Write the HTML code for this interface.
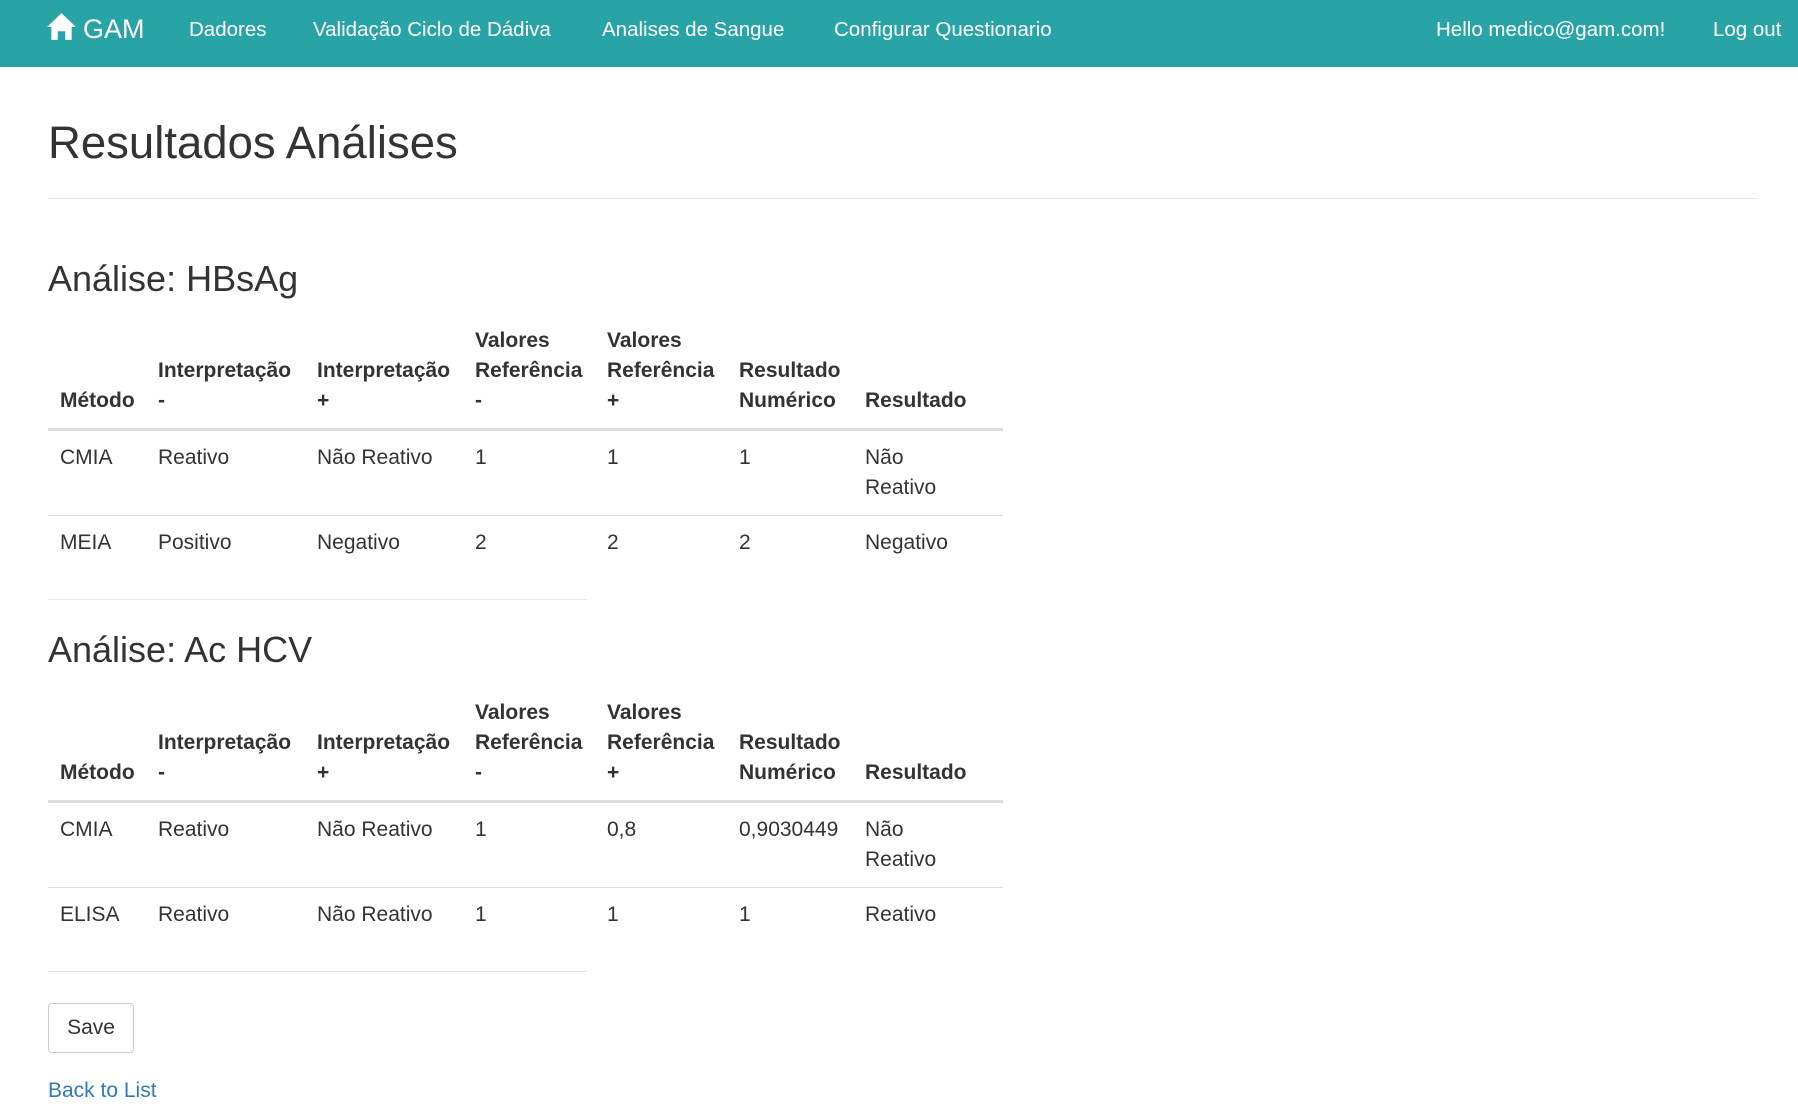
<!DOCTYPE html>
<html><head><meta charset="utf-8"><style>
*{box-sizing:border-box}
body{margin:0;width:1798px;height:1117px;overflow:hidden;background:#fff;font-family:"Liberation Sans",Arial,sans-serif;color:#333;font-size:21px;line-height:30px;position:relative}
.nav{position:absolute;left:0;top:0;width:1798px;height:67px;background:#29a4a6;color:#fff}
.nav span{position:absolute;top:15px;font-size:20.5px;line-height:30px;white-space:nowrap}
.brand{font-size:27px!important;top:14px!important}
h1{position:absolute;left:48px;top:113px;margin:0;font-size:45.5px;line-height:60px;font-weight:400}
h3{position:absolute;left:48px;margin:0;font-size:36px;line-height:42px;font-weight:400}
.hr{position:absolute;left:48px;height:1px;background:#e5e5e5}
table{position:absolute;left:48px;border-collapse:collapse;table-layout:fixed;width:955px}
th,td{padding:12px;text-align:left;vertical-align:top}
th{vertical-align:bottom;border-bottom:3px solid #ddd;font-weight:700}
td{border-top:1px solid #ddd}
tr:nth-child(1) td{border-top:0}
.btn{position:absolute;left:48px;top:1003px;width:86px;height:50px;border:1px solid #ccc;border-radius:4px;font-size:21px;line-height:48px;text-align:center;color:#333}
a{position:absolute;left:48px;top:1076px;color:#337ab7;text-decoration:none;font-size:21px}
</style></head><body>
<div class="nav">
<svg style="position:absolute;left:46px;top:12px" width="31" height="29" viewBox="0 0 29 27"><path d="M14.5 1 L1 14 L5 14 L5 26 L11 26 L11 18 L18 18 L18 26 L24 26 L24 14 L28 14 Z" fill="#fff"/></svg>
<span class="brand" style="left:83px">GAM</span>
<span style="left:189px">Dadores</span>
<span style="left:313px">Validação Ciclo de Dádiva</span>
<span style="left:602px">Analises de Sangue</span>
<span style="left:834px">Configurar Questionario</span>
<span style="left:1436px">Hello medico@gam.com!</span>
<span style="left:1713px">Log out</span>
</div>
<h1>Resultados Análises</h1>
<div class="hr" style="top:198px;width:1710px"></div>
<h3 style="top:258px">Análise: HBsAg</h3>
<table style="top:314px">
<colgroup><col style="width:98px"><col style="width:159px"><col style="width:158px"><col style="width:132px"><col style="width:132px"><col style="width:126px"><col style="width:150px"></colgroup>
<thead><tr><th>Método</th><th>Interpretação -</th><th>Interpretação +</th><th>Valores Referência -</th><th>Valores Referência +</th><th>Resultado Numérico</th><th>Resultado</th></tr></thead>
<tbody><tr><td>CMIA</td><td>Reativo</td><td>Não Reativo</td><td>1</td><td>1</td><td>1</td><td>Não<br>Reativo</td></tr>
<tr><td>MEIA</td><td>Positivo</td><td>Negativo</td><td>2</td><td>2</td><td>2</td><td>Negativo</td></tr></tbody></table>
<div class="hr" style="top:599px;width:539px"></div>
<h3 style="top:629px">Análise: Ac HCV</h3>
<table style="top:686px">
<colgroup><col style="width:98px"><col style="width:159px"><col style="width:158px"><col style="width:132px"><col style="width:132px"><col style="width:126px"><col style="width:150px"></colgroup>
<thead><tr><th>Método</th><th>Interpretação -</th><th>Interpretação +</th><th>Valores Referência -</th><th>Valores Referência +</th><th>Resultado Numérico</th><th>Resultado</th></tr></thead>
<tbody><tr><td>CMIA</td><td>Reativo</td><td>Não Reativo</td><td>1</td><td>0,8</td><td>0,9030449</td><td>Não<br>Reativo</td></tr>
<tr><td>ELISA</td><td>Reativo</td><td>Não Reativo</td><td>1</td><td>1</td><td>1</td><td>Reativo</td></tr></tbody></table>
<div class="hr" style="top:971px;width:539px"></div>
<div class="btn">Save</div>
<a>Back to List</a>
</body></html>
